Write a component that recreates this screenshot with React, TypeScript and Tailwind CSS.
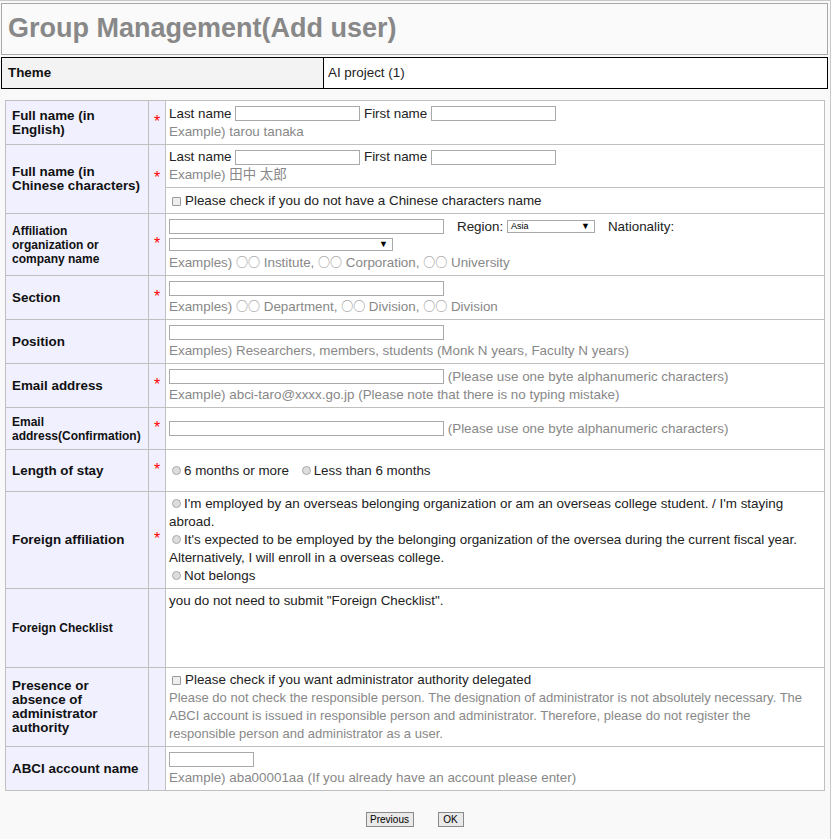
import React from "react";

const font = { fontFamily: '"Liberation Sans", "Noto Sans CJK JP", sans-serif' };

function Star({ show = true, rowSpan }: { show?: boolean; rowSpan?: number }) {
  return (
    <td
      rowSpan={rowSpan}
      className="w-[17px] border border-[#c0c0c0] bg-[#f0f0ff] pb-[2px] text-center align-middle text-[16px] leading-none text-[#ff0000]"
    >
      {show ? "*" : ""}
    </td>
  );
}

function Label({
  children,
  small,
  rowSpan,
}: {
  children: React.ReactNode;
  small?: boolean;
  rowSpan?: number;
}) {
  return (
    <td
      rowSpan={rowSpan}
      className={`w-[143px] border border-[#c0c0c0] bg-[#f0f0ff] py-[2px] pl-[6px] pr-[2px] align-middle font-bold whitespace-nowrap text-[#111] ${
        small ? "text-[12px] leading-[14px]" : "text-[13.4px] leading-[14px]"
      }`}
    >
      {children}
    </td>
  );
}

function Cell({
  children,
  top,
}: {
  children: React.ReactNode;
  top?: boolean;
}) {
  return (
    <td
      className={`border border-[#c0c0c0] bg-white px-[3px] py-[3px] text-[13.4px] leading-[18px] text-[#222] ${
        top ? "align-top" : "align-middle"
      }`}
    >
      {children}
    </td>
  );
}

function TextBox({ w }: { w: string }) {
  return (
    <span
      className={`inline-block h-[15px] ${w} border border-[#a9a9a9] bg-white align-middle`}
    />
  );
}

function Ex({ children }: { children: React.ReactNode }) {
  return <div className="text-[#888]">{children}</div>;
}

// full-width circles from the CJK face
function Oo() {
  return <span className="font-['Noto_Sans_CJK_JP'] text-[12px]">○○</span>;
}

function Check() {
  return (
    <span className="mr-[4px] ml-[3px] inline-block h-[9px] w-[9px] rounded-[1px] border border-[#999] bg-[#eee] align-[-1px]" />
  );
}

function Radio() {
  return (
    <span className="mr-[3px] ml-[3px] inline-block h-[9px] w-[9px] rounded-full border border-[#aaa] bg-[#ddd] align-[0px]" />
  );
}

function Choice({ w, text }: { w: string; text?: string }) {
  return (
    <span
      className={`relative inline-block h-[13px] ${w} border border-[#a9a9a9] bg-white align-middle text-[9px] leading-[11px] text-black`}
    >
      <span className="pl-[3px]">{text}</span>
      <span className="absolute right-[4px] top-0 text-[9px] leading-[11px]">▼</span>
    </span>
  );
}

export default function App() {
  return (
    <div
      style={font}
      className="min-h-screen w-[831px] border-t border-r border-[#c8c8c8] bg-[#f9f9f9] pl-[1px] pr-[2px] pt-[2px] pb-[12px]"
    >
      <div className="h-[52px] border border-[#a8a8a8] bg-[#fafafa] pl-[6px] pt-[8px]">
        <h1 className="text-[27px] font-bold leading-[32px] text-[#888]">
          Group Management(Add user)
        </h1>
      </div>

      <table className="mt-[2px] w-full border-collapse border border-black text-[13.4px]">
        <tbody>
          <tr className="h-[31px]">
            <td className="w-[322px] border border-black bg-[#f3f3f3] pl-[6px] align-middle font-bold text-[#111]">
              Theme
            </td>
            <td className="border border-black bg-white pl-[4px] align-middle text-[#222]">
              AI project (1)
            </td>
          </tr>
        </tbody>
      </table>

      <table className="mt-[11px] ml-[4px] w-[820px] border-collapse border border-[#c0c0c0]">
        <tbody>
          <tr className="h-[44px]">
            <Label>
              Full name (in
              <br />
              English)
            </Label>
            <Star />
            <Cell>
              <div>
                Last name <TextBox w="w-[125px]" /> First name <TextBox w="w-[125px]" />
              </div>
              <Ex>Example) tarou tanaka</Ex>
            </Cell>
          </tr>
          <tr className="h-[43px]">
            <Label rowSpan={2}>
              Full name (in
              <br />
              Chinese characters)
            </Label>
            <Star rowSpan={2} />
            <Cell>
              <div>
                Last name <TextBox w="w-[125px]" /> First name <TextBox w="w-[125px]" />
              </div>
              <Ex>Example) 田中 太郎</Ex>
            </Cell>
          </tr>
          <tr className="h-[26px]">
            <Cell>
              <Check />
              Please check if you do not have a Chinese characters name
            </Cell>
          </tr>
          <tr className="h-[62px]">
            <Label small>
              Affiliation
              <br />
              organization or
              <br />
              company name
            </Label>
            <Star />
            <Cell>
              <div>
                <TextBox w="w-[275px]" />
                <span className="ml-[13px]">Region:</span> <Choice w="w-[88px]" text="Asia" />
                <span className="ml-[13px]">Nationality:</span>
              </div>
              <div className="leading-[17px]">
                <Choice w="w-[224px]" />
              </div>
              <Ex>
                Examples) <Oo /> Institute, <Oo /> Corporation, <Oo /> University
              </Ex>
            </Cell>
          </tr>
          <tr className="h-[44px]">
            <Label>Section</Label>
            <Star />
            <Cell>
              <div>
                <TextBox w="w-[275px]" />
              </div>
              <Ex>
                Examples) <Oo /> Department, <Oo /> Division, <Oo /> Division
              </Ex>
            </Cell>
          </tr>
          <tr className="h-[44px]">
            <Label>Position</Label>
            <Star show={false} />
            <Cell>
              <div>
                <TextBox w="w-[275px]" />
              </div>
              <Ex>Examples) Researchers, members, students (Monk N years, Faculty N years)</Ex>
            </Cell>
          </tr>
          <tr className="h-[44px]">
            <Label>Email address</Label>
            <Star />
            <Cell>
              <div>
                <TextBox w="w-[275px]" />{" "}
                <span className="text-[#888]">(Please use one byte alphanumeric characters)</span>
              </div>
              <Ex>Example) abci-taro@xxxx.go.jp (Please note that there is no typing mistake)</Ex>
            </Cell>
          </tr>
          <tr className="h-[42px]">
            <Label small>
              Email
              <br />
              address(Confirmation)
            </Label>
            <Star />
            <Cell>
              <TextBox w="w-[275px]" />{" "}
              <span className="text-[#888]">(Please use one byte alphanumeric characters)</span>
            </Cell>
          </tr>
          <tr className="h-[42px]">
            <Label>Length of stay</Label>
            <Star />
            <Cell>
              <Radio />6 months or more <span className="ml-[6px]" />
              <Radio />Less than 6 months
            </Cell>
          </tr>
          <tr className="h-[97px]">
            <Label>Foreign affiliation</Label>
            <Star />
            <Cell>
              <div>
                <Radio />I'm employed by an overseas belonging organization or am an overseas
                college student. / I'm staying abroad.
              </div>
              <div>
                <Radio />It's expected to be employed by the belonging organization of the oversea
                during the current fiscal year. Alternatively, I will enroll in a overseas college.
              </div>
              <div>
                <Radio />Not belongs
              </div>
            </Cell>
          </tr>
          <tr className="h-[79px]">
            <Label small>Foreign Checklist</Label>
            <Star show={false} />
            <Cell top>you do not need to submit "Foreign Checklist".</Cell>
          </tr>
          <tr className="h-[79px]">
            <Label>
              Presence or
              <br />
              absence of
              <br />
              administrator
              <br />
              authority
            </Label>
            <Star show={false} />
            <Cell>
              <div>
                <Check />
                Please check if you want administrator authority delegated
              </div>
              <div className="whitespace-nowrap text-[13px] text-[#888]">
                Please do not check the responsible person. The designation of administrator is not
                absolutely necessary. The
                <br />
                ABCI account is issued in responsible person and administrator. Therefore, please do
                not register the
                <br />
                responsible person and administrator as a user.
              </div>
            </Cell>
          </tr>
          <tr className="h-[44px]">
            <Label>ABCI account name</Label>
            <Star show={false} />
            <Cell>
              <div>
                <TextBox w="w-[85px]" />
              </div>
              <Ex>Example) aba00001aa (If you already have an account please enter)</Ex>
            </Cell>
          </tr>
        </tbody>
      </table>

      <div className="mt-[21px] flex justify-center gap-[24px]">
        <button className="h-[15px] w-[48px] border border-[#8a8a8a] bg-[#e9e9e9] text-[10px] leading-[13px] text-black">
          Previous
        </button>
        <button className="h-[15px] w-[26px] border border-[#8a8a8a] bg-[#e9e9e9] text-[10px] leading-[13px] text-black">
          OK
        </button>
      </div>
    </div>
  );
}
